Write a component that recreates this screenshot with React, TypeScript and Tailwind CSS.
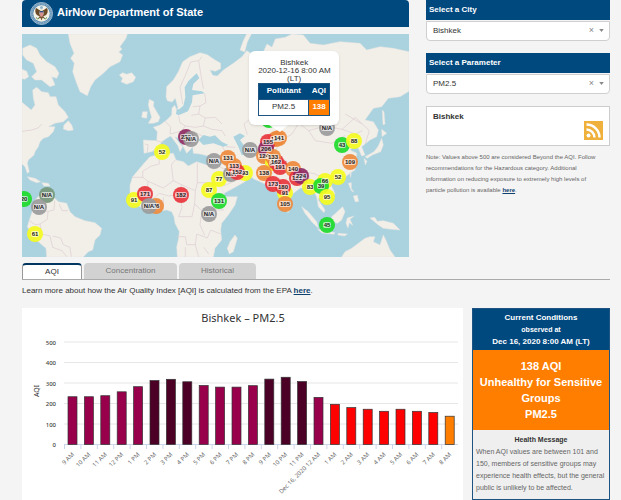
import React from 'react'

const LAND = [
  // Greenland, Iceland
  'M139 0 144 28 156 58 146 73 157 88 152 113 164 148 174 173 196 185 206 158 219 138 244 118 264 98 294 83 302 63 290 54 300 46 294 38 312 13 316 0Z',
  'M292 123 302 116 314 121 329 116 341 130 334 143 314 151 297 143 302 133Z',
  // Canada and the east coast
  'M2 43 24 33 44 43 54 63 74 83 99 98 111 118 104 133 89 128 99 153 84 158 59 138 39 138 29 128 44 113 34 88 14 78 2 63Z',
  'M0 106 14 112 20 128 8 136 0 134Z',
  'M32 168 44 160 59 173 79 176 84 188 102 188 109 213 129 233 139 250 124 263 99 268 79 278 99 278 94 293 79 308 64 313 54 323 49 338 39 353 36 363 19 378 16 388 22 413 16 418 9 398 0 390 0 205 28 228 39 213 34 193Z',
  'M126 273 139 260 149 273 154 288 139 290 124 285Z',
  'M16 428 39 433 56 443 44 446 24 438Z',
  'M59 446 79 448 84 456 66 456Z',
  // South America
  'M39 498 54 483 69 483 94 488 109 503 134 508 144 533 159 548 189 560 219 566 239 583 234 603 219 618 212 648 199 653 184 669 74 669 72 643 54 628 34 608 16 578 22 558 29 538 36 518Z',
  // Africa, Madagascar
  'M384 368 366 388 349 408 332 428 324 453 324 478 334 503 354 518 379 533 404 533 434 528 449 533 456 548 459 568 472 593 469 618 464 638 466 669 574 669 579 643 599 618 596 588 599 568 619 543 639 513 646 488 609 488 599 458 574 403 554 393 524 383 499 396 484 383 462 378 454 358 424 360 404 363Z',
  'M639 603 646 613 634 653 622 660 616 643 624 623Z',
  // Eurasia
  'M366 358 364 318 404 320 406 293 394 280 414 273 434 258 449 243 450 222 458 214 464 226 468 222 460 192 450 204 436 200 432 188 434 158 454 138 469 113 482 83 504 68 534 56 556 62 576 76 596 88 596 104 580 112 564 108 572 124 586 126 604 108 634 88 660 68 674 50 690 60 720 62 735 30 750 40 760 15 790 10 810 0 844 3 864 28 904 33 954 23 1014 28 1034 48 1074 38 1114 43 1161 53 1161 172 1134 188 1099 193 1079 218 1054 223 1029 258 1054 263 1069 288 1064 308 1044 318 1019 338 1029 363 1019 366 1009 343 994 338 984 348 1004 358 1002 388 999 408 984 418 964 433 946 438 924 443 929 458 939 478 924 498 909 488 894 478 889 498 909 528 906 536 889 518 884 488 874 468 859 458 834 463 814 478 799 498 796 518 788 533 779 518 769 478 754 468 744 453 724 448 694 434 664 407 639 388 654 413 669 413 684 428 669 443 634 463 606 478 589 443 574 408 569 388 569 368 534 360 514 358 512 338 504 348 494 358 484 338 470 312 459 308 469 323 482 338 474 353 468 335 446 306 434 313 419 323 409 343 389 353Z',
  'M654 48 664 20 674 0 688 0 676 24 668 54Z',
  // British Isles
  'M379 268 389 250 384 233 379 213 382 196 396 203 394 216 404 233 414 250 409 263 394 268Z',
  'M359 250 362 233 376 233 374 253Z',
  // Japan
  'M1081 228 1086 234 1089 270 1083 272Z',
  'M1079 286 1094 298 1080 308Z',
  'M1079 313 1084 333 1076 353 1051 363 1036 373 1029 368 1056 353 1069 336Z',
  'M1026 373 1035 382 1030 393Z',
  // South-east Asia
  'M984 420 988 416 986 430Z',
  'M979 448 988 446 988 464 996 474 988 470Z',
  'M994 486 1006 484 1010 502 1000 504Z',
  'M839 518 859 533 884 563 889 583 869 563 849 538Z',
  'M929 548 946 533 962 518 969 533 959 558 946 568 932 563Z',
  'M887 586 919 591 939 596 936 601 900 597Z',
  'M976 552 996 546 984 556 992 574 982 566 978 582 972 568Z',
  'M948 598 976 600 968 606 948 603Z',
  'M1044 552 1058 550 1066 562 1084 560 1114 568 1134 588 1109 586 1084 583 1069 573Z',
  'M796 520 802 530 798 536 793 530Z',
  // Australia
  'M959 669 969 653 989 643 1009 628 1029 613 1044 608 1059 608 1054 623 1074 633 1084 603 1094 623 1104 648 1119 669Z',
]

const WATER = [
  'M524 118 532 132 514 150 510 168 540 172 548 178 512 184 510 205 498 232 470 244 462 240 464 226 472 226 484 215 490 190 488 160 500 140Z',
  'M529 318 544 303 564 308 579 304 599 323 619 333 604 338 574 328 544 333Z',
  'M634 308 654 298 669 306 654 318 669 338 674 363 659 363 649 338Z',
  'M708 66 716 90 706 108 700 92Z',
  'M724 74 732 86 722 94Z',
  'M905 225 918 214 922 202 915 216Z',
]

const BORDERS = [
  'M0 292 30 288 48 282 60 270M24 498 48 530 78 532 76 556 54 570 60 600 84 606 92 640 120 650 134 668M78 532 96 528 98 500M112 510 120 530 138 530M22 560 40 572 54 570M92 606 116 612 124 632 144 640 148 668',
  'M332 430 362 430 362 412 388 396 412 390 410 364M362 430 378 442 374 484 340 482M378 442 424 462 454 440 478 452 474 480 440 486 412 478 390 498M454 440 448 392 460 378M478 452 520 470 526 446 526 386M526 446 584 446M520 470 518 510 540 530 580 528 606 528M474 480 480 520 470 548 510 548 518 510M464 608 490 608 494 632 520 632 524 600 556 612 566 588 596 600M540 530 534 572 548 604M490 640 490 669M520 632 530 669M400 500 400 530M424 490 424 528M580 528 578 560M546 640 560 660',
  'M368 330 378 332 376 356M404 320 424 326M430 262 446 280 444 300M470 246 474 266 490 276 478 292 444 300M490 276 520 280 544 276 550 252 530 240 508 244M544 276 570 286 600 290 610 306M530 240 534 216 552 206 548 178M534 216 512 218M482 210 474 160 492 120 506 84 530 80 540 68M530 80 538 130 544 164M478 292 500 300 522 296 540 306M490 304 494 322 520 324M550 252 580 250 600 270',
  'M676 302 666 270 690 250 750 256 780 240 830 268 860 290 910 276 960 286 1000 300 1022 290M830 268 810 300 780 318 760 350 790 380 840 412 880 420 910 438M860 290 880 320 930 328 970 304M700 350 730 370 730 410 712 440M674 340 700 350 760 350M600 336 622 372 640 390M612 338 640 340M570 384 604 404 640 414M604 456 640 440 670 430M750 420 770 400M840 412 836 450M860 420 870 460M880 440 906 466M960 286 1000 250 1042 290 1030 330M1020 270 970 240',
]

const COLORS = {
  gray: '#9b9b9b',
  moss: '#76977a',
  yellow: '#f5fb1e',
  green: '#1edb2a',
  orange: '#ee8a3c',
  red: '#e8353c',
  purple: '#8f2a63',
}

type Marker = [x: number, y: number, label: string, color: keyof typeof COLORS]

const MARKERS: Marker[] = [
  [2, 165, '20', 'green'],
  [25, 161, 'N/A', 'moss'],
  [17, 173, 'N/A', 'gray'],
  [13, 200, '61', 'yellow'],
  [140, 118, '52', 'yellow'],
  [164, 103, '220', 'purple'],
  [169, 105, 'N/A', 'gray'],
  [112, 166, '91', 'yellow'],
  [123, 160, '171', 'red'],
  [134, 172, '76', 'orange'],
  [127, 172, 'N/A', 'gray'],
  [159, 161, '182', 'red'],
  [192, 127, 'N/A', 'gray'],
  [206, 124, '131', 'orange'],
  [197, 145, '77', 'yellow'],
  [187, 156, '87', 'yellow'],
  [197, 167, '131', 'green'],
  [187, 180, 'N/A', 'gray'],
  [223, 139, '93', 'yellow'],
  [209, 140, 'N/A', 'gray'],
  [212, 132, '113', 'orange'],
  [215, 138, '152', 'red'],
  [228, 116, 'N/A', 'gray'],
  [247, 86, '50', 'green'],
  [305, 94, 'N/A', 'gray'],
  [254, 105, '121', 'orange'],
  [246, 108, '155', 'red'],
  [257, 104, '141', 'orange'],
  [242, 122, '124', 'orange'],
  [244, 115, '206', 'purple'],
  [251, 129, '97', 'yellow'],
  [254, 128, '162', 'red'],
  [251, 123, '133', 'orange'],
  [258, 133, '191', 'red'],
  [242, 139, '138', 'orange'],
  [271, 135, '140', 'orange'],
  [275, 144, '151', 'red'],
  [279, 142, '224', 'purple'],
  [263, 159, '91', 'yellow'],
  [261, 153, '180', 'red'],
  [251, 150, '173', 'red'],
  [263, 170, '105', 'orange'],
  [288, 153, '83', 'yellow'],
  [303, 147, '66', 'yellow'],
  [316, 143, '52', 'yellow'],
  [299, 152, '39', 'green'],
  [305, 163, '95', 'yellow'],
  [305, 191, '45', 'green'],
  [320, 111, '43', 'green'],
  [332, 107, '88', 'yellow'],
  [328, 128, '109', 'orange'],
]

const HOURS: [label: string, aqi: number][] = [
  ['9 AM', 233],
  ['10 AM', 233],
  ['11 AM', 238],
  ['12 PM', 257],
  ['1 PM', 282],
  ['2 PM', 312],
  ['3 PM', 318],
  ['4 PM', 306],
  ['5 PM', 288],
  ['6 PM', 280],
  ['7 PM', 280],
  ['8 PM', 287],
  ['9 PM', 319],
  ['10 PM', 328],
  ['11 PM', 307],
  ['Dec 16, 2020 12 AM', 230],
  ['1 AM', 196],
  ['2 AM', 180],
  ['3 AM', 172],
  ['4 AM', 162],
  ['5 AM', 172],
  ['6 AM', 162],
  ['7 AM', 156],
  ['8 AM', 138],
]

const barColor = (aqi: number) => {
  if (aqi > 300) return '#4c0026'
  if (aqi > 200) return '#99004c'
  if (aqi > 150) return '#ff0000'
  return '#ff7e00'
}

const Seal: React.FC = () => (
  <svg viewBox="0 0 46 46" className="size-[23px]" aria-hidden="true">
    <circle cx="23" cy="23" r="22" fill="#5f8fb4" stroke="#9ab9cf" strokeWidth="2" />
    <circle cx="23" cy="23" r="19" fill="none" stroke="#c3d3dc" strokeWidth="1.5" strokeDasharray="2 1.5" />
    <circle cx="23" cy="23" r="16.5" fill="#f4f1e6" />
    <path d="M21 17c-4-1-6-4-9-5-2 4-2 9 1 13 2 3 5 3 8 3zM25 17c4-1 6-4 9-5 2 4 2 9-1 13-2 3-5 3-8 3z" fill="#6b4a26" />
    <path d="M21 26 16 33l5-1 2 5 2-5 5 1-5-7z" fill="#7a5730" />
    <path d="M12 31q3 4 6 2M34 31q-3 4-6 2" stroke="#5d8a4b" strokeWidth="2" fill="none" />
    <circle cx="23" cy="11" r="3" fill="#8fb5cf" />
    <circle cx="23" cy="15.5" r="2" fill="#e8e0cc" />
    <path d="M19 18h8v6q0 4-4 6-4-2-4-6z" fill="#f5eeee" />
    <path d="M19 18h8v3h-8z" fill="#2f4a80" />
    <path d="M21 21v7M23 21v9M25 21v7" stroke="#b5332f" />
  </svg>
)

const WorldMap: React.FC = () => (
  <div className="relative mt-[7px]">
    <svg viewBox="0 0 387 223" className="block w-full bg-[#aad3df]" role="img" aria-label="Air quality map">
      <g transform="scale(0.33333)">
        {LAND.map((d) => (
          <path key={d} d={d} fill="#f2efe9" stroke="#e6e3e0" strokeWidth="1.5" strokeLinejoin="round" />
        ))}
        {WATER.map((d) => (
          <path key={d} d={d} fill="#aad3df" />
        ))}
        {BORDERS.map((d) => (
          <path key={d} d={d} fill="none" stroke="#dccbd0" strokeWidth="2" strokeLinejoin="round" />
        ))}
      </g>
      {MARKERS.map(([x, y, , color]) => (
        <circle key={`${x}-${y}`} cx={x} cy={y} r="8" fill={COLORS[color]} fillOpacity="0.92" />
      ))}
      {/* labels stay above every circle so crowded cities remain readable */}
      {MARKERS.map(([x, y, label]) => (
        <g key={`${x}-${y}`}>
          <rect x={x - label.length * 2} y={y - 3} width={label.length * 4} height="6" rx="2" fill="#fff" fillOpacity="0.65" />
          <text x={x} y={y + 2} textAnchor="middle" className="fill-[#222] text-[6px] font-bold">
            {label}
          </text>
        </g>
      ))}
      <path d="M247 91h19l-8 7z" fill="#fff" />
    </svg>
    <div className="absolute left-[58.7%] top-[7.6%] w-[90px] rounded-md bg-white px-[9px] pt-2 pb-[9px] text-center text-[8px] leading-[8px] text-[#333] shadow">
      <p>Bishkek</p>
      <p className="whitespace-nowrap">2020-12-16 8:00 AM</p>
      <p>(LT)</p>
      <table className="w-full border-collapse border border-[#1d5482]">
        <thead>
          <tr className="h-4 bg-[#00497f] text-white">
            <th>Pollutant</th>
            <th>AQI</th>
          </tr>
        </thead>
        <tbody>
          <tr className="h-4">
            <td className="border border-[#1d5482]">PM2.5</td>
            <td className="border border-[#1d5482] bg-[#ff7e00] font-bold text-white">138</td>
          </tr>
        </tbody>
      </table>
    </div>
  </div>
)

const Picker: React.FC<{ id: string; label: string; value: string }> = ({ id, label, value }) => (
  <div className="mb-3">
    <label htmlFor={id} className="block bg-[#00497f] px-[3px] text-[8px] leading-5 font-bold text-white">
      {label}
    </label>
    <div className="relative mt-px">
      <select
        id={id}
        defaultValue={value}
        className="block h-5 w-full appearance-none rounded-b-sm border border-[#cfcfcf] bg-white pl-1.5 text-[8px] text-[#333]"
      >
        <option>{value}</option>
      </select>
      <button type="button" aria-label="Clear" className="absolute top-1 right-4 text-[9px] leading-[10px] text-[#888]">
        ×
      </button>
      <svg viewBox="0 0 6 4" className="pointer-events-none absolute top-2 right-1.5 h-[3px] w-[5px]" aria-hidden="true">
        <path d="M0 0h6L3 4z" fill="#888" />
      </svg>
    </div>
  </div>
)

const Chart: React.FC = () => (
  <svg viewBox="0 0 441 192" className="block w-full font-['Noto_Sans',sans-serif]" role="img" aria-label="Bishkek – PM2.5">
    <text x="221" y="14" textAnchor="middle" className="fill-[#333] text-[11px]">
      Bishkek – PM2.5
    </text>
    <text transform="translate(17 83) rotate(-90)" textAnchor="middle" className="fill-[#333] text-[7px]">
      AQI
    </text>
    {[0, 100, 200, 300, 400, 500].map((tick) => (
      <g key={tick}>
        <path d={`M42 ${136.5 - tick * 0.205}h394`} stroke={tick ? '#e6e6e6' : '#ccd6eb'} />
        <text x="34" y={139 - tick * 0.205} textAnchor="end" className="fill-[#444] text-[6px] font-medium">
          {tick}
        </text>
      </g>
    ))}
    {HOURS.map(([label, aqi], i) => {
      const x = 42.5 + i * 16.4
      const top = 136.5 - aqi * 0.205
      return (
        <g key={label}>
          <path d={`M${x} 137v4`} stroke="#ccd6eb" />
          <rect x={x + 3.5} y={top} width="9" height={136.5 - top} fill={barColor(aqi)} stroke="#333" strokeWidth="0.7" />
          <text transform={`translate(${x + 10} 147) rotate(-45)`} textAnchor="end" className="fill-[#666] text-[6px]">
            {label}
          </text>
        </g>
      )
    })}
  </svg>
)

const App: React.FC = () => (
  <div className="min-h-screen bg-[#f4f4f4] pr-[11px] pl-[22px] font-['Liberation_Sans',Arial,sans-serif] text-[#333]">
    <div className="flex gap-[17px]">
      <main className="min-w-0 flex-1">
        <header className="flex h-[27px] items-center gap-1 rounded-t-sm bg-[#00497f] pl-2">
          <Seal />
          <h1 className="pb-1 text-[11px] leading-4 font-bold text-white">AirNow Department of State</h1>
        </header>
        <WorldMap />
      </main>
      <aside className="w-[184px] shrink-0">
        <Picker id="city" label="Select a City" value="Bishkek" />
        <Picker id="parameter" label="Select a Parameter" value="PM2.5" />
        <section className="flex h-10 justify-between border border-[#ccc] bg-white px-1.5 py-[5px]">
          <h2 className="text-[8px] leading-[10px] font-bold">Bishkek</h2>
          <a href="#rss" aria-label="RSS feed" className="self-end">
            <svg viewBox="0 0 19 19" className="size-[19px]">
              <path d="M0 0h19v19H0z" fill="#efb03c" />
              <circle cx="4.5" cy="14.5" r="2" fill="#fff" />
              <path d="M2.5 8.5a8 8 0 0 1 8 8M2.5 3.5a13 13 0 0 1 13 13" fill="none" stroke="#fff" strokeWidth="2.4" />
            </svg>
          </a>
        </section>
        <p className="mt-1.5 pr-2 text-[6px] leading-[11px] text-[#666]">
          Note: Values above 500 are considered Beyond the AQI. Follow recommendations for the Hazardous category.
          Additional information on reducing exposure to extremely high levels of particle pollution is available{' '}
          <a href="#beyond" className="font-bold text-[#10426f] underline">
            here
          </a>
          .
        </p>
      </aside>
    </div>

    <div role="tablist" className="mt-1.5 flex h-[17px] gap-0.5 border-b border-[#aaa] text-[8px] text-[#777]">
      <button role="tab" aria-selected="true" className="w-[60px] rounded-t-sm border border-t-2 border-b-0 border-[#999] border-t-[#00365f] bg-white text-[#333]">
        AQI
      </button>
      <button role="tab" aria-selected="false" className="w-[93px] rounded-t-sm bg-[#d2d2d2]">
        Concentration
      </button>
      <button role="tab" aria-selected="false" className="w-[77px] rounded-t-sm bg-[#d2d2d2]">
        Historical
      </button>
    </div>
    <p className="mt-1.5 text-[8px] leading-[10px]">
      Learn more about how the Air Quality Index [AQI] is calculated from the EPA{' '}
      <a href="#epa" className="font-bold text-[#10426f] underline">
        here
      </a>
      .
    </p>

    <div className="mt-3 flex gap-[9px]">
      <section className="min-w-0 flex-1 bg-white">
        <Chart />
      </section>
      <section className="w-[138px] shrink-0 border border-[#1d5482] bg-[#efefef] text-center">
        <div className="bg-[#00497f] pt-[3px] pb-0.5 text-[8px] leading-[12px] font-bold text-white">
          <h2>Current Conditions</h2>
          <p className="text-[7px]">observed at</p>
          <p>Dec 16, 2020 8:00 AM (LT)</p>
        </div>
        <div className="bg-[#ff7e00] px-1 py-2 text-[11px] leading-4 font-bold text-white">
          <p>138 AQI</p>
          <p>Unhealthy for Sensitive Groups</p>
          <p>PM2.5</p>
        </div>
        <h3 className="pt-1 text-[7px] leading-[12px] font-bold">Health Message</h3>
        <p className="px-[3px] pb-[3px] text-left text-[7px] leading-[12px] text-[#666]">
          When AQI values are between 101 and 150, members of sensitive groups may experience health effects, but the
          general public is unlikely to be affected.
        </p>
      </section>
    </div>
  </div>
)

export default App
